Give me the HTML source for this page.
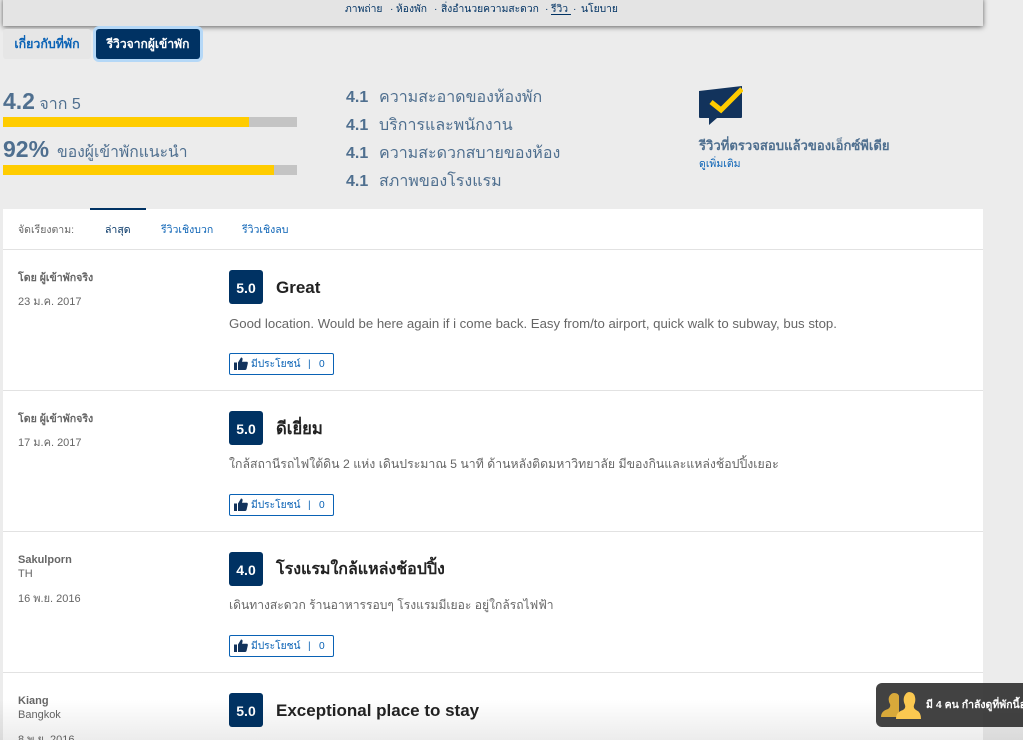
<!DOCTYPE html>
<html lang="th">
<head>
<meta charset="utf-8">
<title>รีวิว</title>
<style>
html,body{margin:0;padding:0;overflow:hidden;height:740px}
body{width:1023px;background:#ececec;position:relative;font-family:"Liberation Sans","Noto Sans CJK SC",sans-serif;color:#666}
.a{position:absolute;white-space:nowrap}
a{color:#0a62b5;text-decoration:none}
.topbar{left:3px;top:-2px;width:980px;height:28px;background:#e4e4e4;box-shadow:0 1px 5px rgba(0,0,0,.6)}
.nav{top:3px;font-size:10.3px;line-height:14px;color:#003263}
.nav u{text-underline-offset:2px}
.tab1{left:3px;top:29px;width:88px;height:30px;background:#e6e6e6;border-radius:3px;text-align:center;line-height:30px;font-size:12.4px;color:#0a62b5;font-weight:bold}
.tab2{left:96px;top:29px;width:104px;height:30px;background:#003263;border-radius:3px;box-shadow:0 0 0 3px #b5d8f7;text-align:center;line-height:30px;font-size:12.1px;color:#fff;font-weight:bold}
.bar{left:3px;width:294px;height:10px;background:#c4c4c4}
.bar i{display:block;height:10px;background:#fc0}
.score{color:#4f6f8f;font-size:16px;line-height:26px}
.score b{font-size:23px}
.sub{left:346px;color:#4f6f8f;font-size:16px;line-height:22px}
.sub b{font-size:16px;display:inline-block;width:33px}
.panel{left:3px;top:209px;width:980px;height:531px;background:#fff}
.ind{left:90px;top:208px;width:56px;height:2px;background:#003263}
.line{left:3px;width:980px;height:1px;background:#e2e2e2}
.sort{top:223px;font-size:10.5px;line-height:14px}
.badge{left:229px;width:34px;height:34px;background:#003263;border-radius:3px;color:#fff;font-size:14px;font-weight:bold;line-height:36px;text-align:center}
.title{left:276px;font-size:17px;line-height:22px;font-weight:bold;color:#222}
.text{left:229px;font-size:12.3px;line-height:18px;color:#666}
.name{left:18px;font-size:10.6px;line-height:14px;font-weight:bold;color:#666}
.latin{font-size:11px}
.loc{left:18px;font-size:11px;line-height:14px;color:#666}
.date{left:18px;font-size:11px;line-height:14px;color:#666}
.help{left:229px;width:103px;height:20px;border:1px solid #0a62b5;border-radius:2px;background:#fff;font-size:10.2px;line-height:21px;color:#0a62b5}
.help svg{position:absolute;left:4px;top:3px}
.help span{position:absolute;left:21px;top:0}
.help em{position:absolute;left:78px;top:0;font-style:normal}
.help s{position:absolute;left:89px;top:0;text-decoration:none}
.fade{left:0;top:700px;width:1023px;height:40px;background:linear-gradient(#fff,#ececec);mix-blend-mode:multiply}
.pop{left:876px;top:683px;width:160px;height:44px;background:rgba(52,52,52,.93);border-radius:6px;color:#fff;font-size:10.5px;font-weight:bold;line-height:44px}
.pop span{position:absolute;left:50px;top:0}
.pop svg{position:absolute;left:5px;top:9px}
</style>
</head>
<body>
<div class="a topbar"></div>
<div class="a nav" style="left:345px">ภาพถ่าย</div>
<div class="a nav" style="left:390px">·</div>
<div class="a nav" style="left:396px">ห้องพัก</div>
<div class="a nav" style="left:434px">·</div>
<div class="a nav" style="left:441px">สิ่งอำนวยความสะดวก</div>
<div class="a nav" style="left:545px">·</div>
<div class="a nav" style="left:551px"><u>รีวิว&nbsp;</u></div>
<div class="a nav" style="left:573px">·</div>
<div class="a nav" style="left:581px">นโยบาย</div>

<div class="a tab1">เกี่ยวกับที่พัก</div>
<div class="a tab2">รีวิวจากผู้เข้าพัก</div>

<div class="a score" style="left:3px;top:88px"><b>4.2</b> จาก 5</div>
<div class="a bar" style="top:117px"><i style="width:246px"></i></div>
<div class="a score" style="left:3px;top:136px"><b>92%</b> <span style="font-size:15.7px;margin-left:3.500px">ของผู้เข้าพักแนะนำ</span></div>
<div class="a bar" style="top:165px"><i style="width:271px"></i></div>

<div class="a sub" style="top:87px"><b>4.1</b>ความสะอาดของห้องพัก</div>
<div class="a sub" style="top:115px"><b>4.1</b>บริการและพนักงาน</div>
<div class="a sub" style="top:143px"><b>4.1</b>ความสะดวกสบายของห้อง</div>
<div class="a sub" style="top:171px"><b>4.1</b>สภาพของโรงแรม</div>

<svg class="a" style="left:699px;top:86px" width="44" height="40" viewBox="0 0 44 40">
<path d="M0 5 L43 0 V31 Q43 32 42 32 H18 L10 39 V32 H1 Q0 32 0 31 Z" fill="#12335c"/>
<path d="M12 16 L22 24 L43 3" fill="none" stroke="#fc0" stroke-width="5"/>
</svg>
<div class="a" style="left:699px;top:137px;font-size:13.1px;line-height:18px;font-weight:bold;color:#4f6f8f">รีวิวที่ตรวจสอบแล้วของเอ็กซ์พีเดีย</div>
<div class="a" style="left:699px;top:157px;font-size:10.5px;line-height:14px"><a href="#">ดูเพิ่มเติม</a></div>

<div class="a panel"></div>
<div class="a ind"></div>
<div class="a sort" style="left:18px;color:#666">จัดเรียงตาม:</div>
<div class="a sort" style="left:105px;color:#003263">ล่าสุด</div>
<div class="a sort" style="left:161px;color:#0a62b5">รีวิวเชิงบวก</div>
<div class="a sort" style="left:242px;color:#0a62b5">รีวิวเชิงลบ</div>
<div class="a line" style="top:249px"></div>

<!-- Review 1 -->
<div class="a name" style="top:271px">โดย ผู้เข้าพักจริง</div>
<div class="a date" style="top:295px">23 ม.ค. 2017</div>
<div class="a badge" style="top:270px">5.0</div>
<div class="a title" style="top:277px">Great</div>
<div class="a text" style="top:315px;font-size:13.2px">Good location. Would be here again if i come back. Easy from/to airport, quick walk to subway, bus stop.</div>
<div class="a help" style="top:353px"><svg width="14" height="13" viewBox="0 0 14 13"><path d="M0 5.500H3V13H0Z M4 5.500 L7 0.500 Q9 0.500 8.500 3 L8 4.800 H13 Q14 5 13.800 6.500 L12.500 12 Q12.200 13 11 13 H4Z" fill="#12335c"/></svg><span>มีประโยชน์</span><em>|</em><s>0</s></div>
<div class="a line" style="top:390px"></div>

<!-- Review 2 -->
<div class="a name" style="top:412px">โดย ผู้เข้าพักจริง</div>
<div class="a date" style="top:436px">17 ม.ค. 2017</div>
<div class="a badge" style="top:411px">5.0</div>
<div class="a title" style="top:418px;font-size:16.6px">ดีเยี่ยม</div>
<div class="a text" style="top:455px">ใกล้สถานีรถไฟใต้ดิน 2 แห่ง เดินประมาณ 5 นาที ด้านหลังติดมหาวิทยาลัย มีของกินและแหล่งช้อปปิ้งเยอะ</div>
<div class="a help" style="top:494px"><svg width="14" height="13" viewBox="0 0 14 13"><path d="M0 5.500H3V13H0Z M4 5.500 L7 0.500 Q9 0.500 8.500 3 L8 4.800 H13 Q14 5 13.800 6.500 L12.500 12 Q12.200 13 11 13 H4Z" fill="#12335c"/></svg><span>มีประโยชน์</span><em>|</em><s>0</s></div>
<div class="a line" style="top:531px"></div>

<!-- Review 3 -->
<div class="a name latin" style="top:553px">Sakulporn</div>
<div class="a loc" style="top:567px">TH</div>
<div class="a date" style="top:592px">16 พ.ย. 2016</div>
<div class="a badge" style="top:552px">4.0</div>
<div class="a title" style="top:559px;font-size:16px">โรงแรมใกล้แหล่งช้อปปิ้ง</div>
<div class="a text" style="top:596px;font-size:12.1px">เดินทางสะดวก ร้านอาหารรอบๆ โรงแรมมีเยอะ อยู่ใกล้รถไฟฟ้า</div>
<div class="a help" style="top:635px"><svg width="14" height="13" viewBox="0 0 14 13"><path d="M0 5.500H3V13H0Z M4 5.500 L7 0.500 Q9 0.500 8.500 3 L8 4.800 H13 Q14 5 13.800 6.500 L12.500 12 Q12.200 13 11 13 H4Z" fill="#12335c"/></svg><span>มีประโยชน์</span><em>|</em><s>0</s></div>
<div class="a line" style="top:672px"></div>

<!-- Review 4 -->
<div class="a name latin" style="top:694px">Kiang</div>
<div class="a loc" style="top:708px">Bangkok</div>
<div class="a date" style="top:733px">8 พ.ย. 2016</div>
<div class="a badge" style="top:693px">5.0</div>
<div class="a title" style="top:700px">Exceptional place to stay</div>

<div class="a fade"></div>

<div class="a pop">
<svg width="42" height="28" viewBox="0 0 42 28">
<path d="M0 25 Q0 19 7 17 Q10 15 9 12 Q7 9 8 5 Q10 1 13 1 Q18 1 18 5 L18 25Z" fill="#d9a93a"/>
<path d="M15 27 Q15 20 22 18 Q25 16 24 13 Q22 9 23 5 Q25 0 28 0 Q33 0 34 5 Q35 9 33 13 Q32 16 35 18 Q40 20 40 27Z" fill="#fbc850"/>
</svg>
<span>มี 4 คน กำลังดูที่พักนี้อยู่</span>
</div>
</body>
</html>
